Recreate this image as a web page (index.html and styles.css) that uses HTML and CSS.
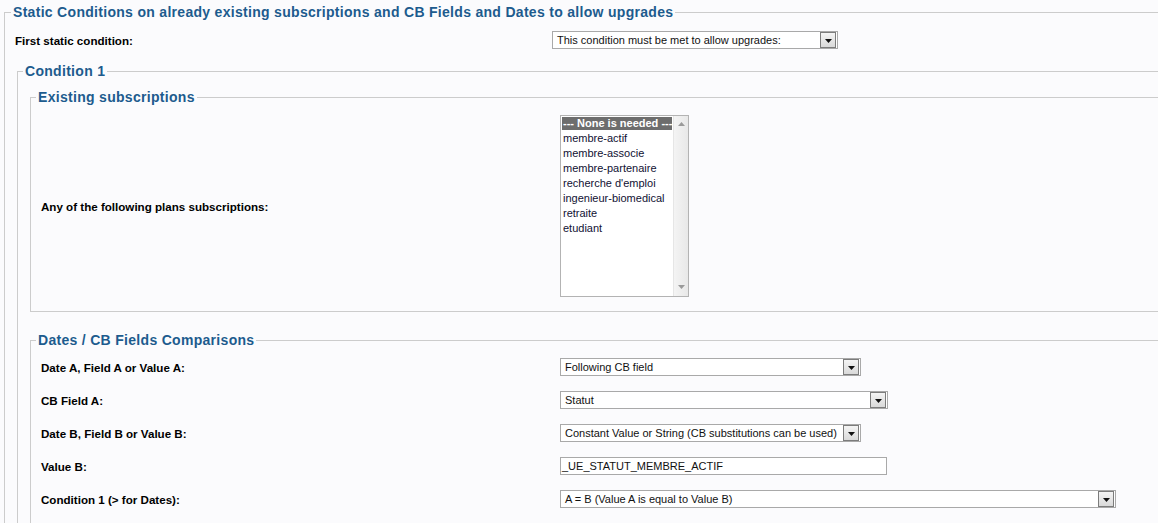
FILE: index.html
```html
<!DOCTYPE html>
<html>
<head>
<meta charset="utf-8">
<link rel="stylesheet" href="styles.css">
</head>
<body>
<fieldset class="fs fs-outer">
  <legend>Static Conditions on already existing subscriptions and CB Fields and Dates to allow upgrades</legend>
  <div class="row row-outer">
    <div class="label">First static condition:</div>
    <div class="select w285"><span class="val">This condition must be met to allow upgrades:</span><span class="btn"><svg width="7" height="4" viewBox="0 0 7 4"><path d="M0 0H7L3.5 4Z" fill="#111"/></svg></span></div>
  </div>
  <fieldset class="fs fs-cond">
    <legend>Condition 1</legend>
    <fieldset class="fs fs-inner fs-exist">
      <legend>Existing subscriptions</legend>
      <div class="row row-inner row-list">
        <div class="label">Any of the following plans subscriptions:</div>
        <div class="listbox">
          <div class="options">
            <div class="opt sel">--- None is needed ---</div>
            <div class="opt">membre-actif</div>
            <div class="opt">membre-associe</div>
            <div class="opt">membre-partenaire</div>
            <div class="opt">recherche d'emploi</div>
            <div class="opt">ingenieur-biomedical</div>
            <div class="opt">retraite</div>
            <div class="opt">etudiant</div>
          </div>
          <div class="scroll">
            <svg width="7" height="4" viewBox="0 0 7 4"><path d="M0 4H7L3.5 0Z" fill="#9a9a9a"/></svg>
            <svg width="7" height="4" viewBox="0 0 7 4"><path d="M0 0H7L3.5 4Z" fill="#9a9a9a"/></svg>
          </div>
        </div>
      </div>
    </fieldset>
    <fieldset class="fs fs-inner fs-dates">
      <legend>Dates / CB Fields Comparisons</legend>
      <div class="rows">
        <div class="row row-inner">
          <div class="label">Date A, Field A or Value A:</div>
          <div class="select w300"><span class="val">Following CB field</span><span class="btn"><svg width="7" height="4" viewBox="0 0 7 4"><path d="M0 0H7L3.5 4Z" fill="#111"/></svg></span></div>
        </div>
        <div class="row row-inner">
          <div class="label">CB Field A:</div>
          <div class="select w327"><span class="val">Statut</span><span class="btn"><svg width="7" height="4" viewBox="0 0 7 4"><path d="M0 0H7L3.5 4Z" fill="#111"/></svg></span></div>
        </div>
        <div class="row row-inner">
          <div class="label">Date B, Field B or Value B:</div>
          <div class="select w300"><span class="val">Constant Value or String (CB substitutions can be used)</span><span class="btn"><svg width="7" height="4" viewBox="0 0 7 4"><path d="M0 0H7L3.5 4Z" fill="#111"/></svg></span></div>
        </div>
        <div class="row row-inner">
          <div class="label">Value B:</div>
          <div class="input w326">_UE_STATUT_MEMBRE_ACTIF</div>
        </div>
        <div class="row row-inner">
          <div class="label">Condition 1 (&gt; for Dates):</div>
          <div class="select w555"><span class="val">A = B (Value A is equal to Value B)</span><span class="btn"><svg width="7" height="4" viewBox="0 0 7 4"><path d="M0 0H7L3.5 4Z" fill="#111"/></svg></span></div>
        </div>
      </div>
    </fieldset>
  </fieldset>
</fieldset>
</body>
</html>
```

FILE: styles.css
```css
html, body {
  margin: 0;
  padding: 0;
  background: #fbfbfd;
  overflow: hidden;
  font-family: "Liberation Sans", Arial, sans-serif;
  color: #000;
}

.fs {
  border: 1px solid #cccccc;
  margin: 0;
  min-width: 0;
}

.fs > legend {
  font-size: 14px;
  font-weight: bold;
  letter-spacing: 0.3px;
  line-height: 24px;
  color: #1d5b8e;
  padding: 0 2px;
}

.fs-outer {
  margin-left: 4px;
  width: 1300px;
  padding: 0 0 40px 6px;
}

.fs-cond {
  margin: 10px 0 0 6px;
  padding: 0 0 40px 5px;
}

.fs-inner {
  margin: 0 0 0 7px;
  padding: 0 0 0 5px;
}

.fs-exist {
  margin-top: 2px;
  padding-bottom: 14px;
}

.fs-dates {
  margin-top: 16px;
  padding-bottom: 30px;
}

.row {
  display: flex;
  align-items: center;
}

.row-outer {
  margin-top: 7px;
}

.row-outer .label {
  width: 537px;
  padding-left: 4px;
}

.row-inner .label {
  width: 519px;
  padding-left: 5px;
}

.row-list {
  margin-top: 6px;
}

.rows {
  display: flex;
  flex-direction: column;
  gap: 15px;
  margin-top: 6px;
}

.label {
  font-size: 11.6px;
  font-weight: bold;
  flex-shrink: 0;
}

.select, .input {
  box-sizing: border-box;
  height: 18px;
  border: 1px solid #a9a9a9;
  background: #fff;
  display: flex;
  align-items: center;
  font-size: 11px;
  color: #111;
  flex-shrink: 0;
}

.select .val {
  flex: 1;
  padding-left: 4px;
  white-space: nowrap;
  overflow: hidden;
}

.input {
  padding-left: 1px;
}

.select .btn {
  box-sizing: border-box;
  width: 16px;
  height: 16px;
  margin-right: 1px;
  border: 1px solid #7c7c7c;
  background: linear-gradient(#f4f4f4, #d9d9d9);
  display: flex;
  align-items: center;
  justify-content: center;
  padding-top: 1px;
}

.w285 { width: 286px; }
.w300 { width: 301px; }
.w327 { width: 328px; }
.w326 { width: 327px; }
.w555 { width: 556px; }

.listbox {
  box-sizing: border-box;
  width: 129px;
  height: 182px;
  border: 1px solid #b3b3b3;
  background: #fff;
  display: flex;
  flex-shrink: 0;
}

.options {
  flex: 1;
  padding: 1px 1px 0 1px;
  font-size: 11px;
  color: #111133;
}

.opt {
  line-height: 15px;
  height: 15px;
  padding-left: 1px;
  white-space: nowrap;
}

.opt.sel {
  height: 13px;
  line-height: 13px;
  background: #6d6d6d;
  color: #fff;
  font-weight: bold;
  margin-bottom: 1px;
}

.scroll {
  width: 16px;
  background: linear-gradient(90deg, #f4f4f4, #e8e8e8);
  border-left: 1px solid #e6e6e6;
  display: flex;
  flex-direction: column;
  justify-content: space-between;
  align-items: center;
  padding: 6px 0 7px;
}
```
